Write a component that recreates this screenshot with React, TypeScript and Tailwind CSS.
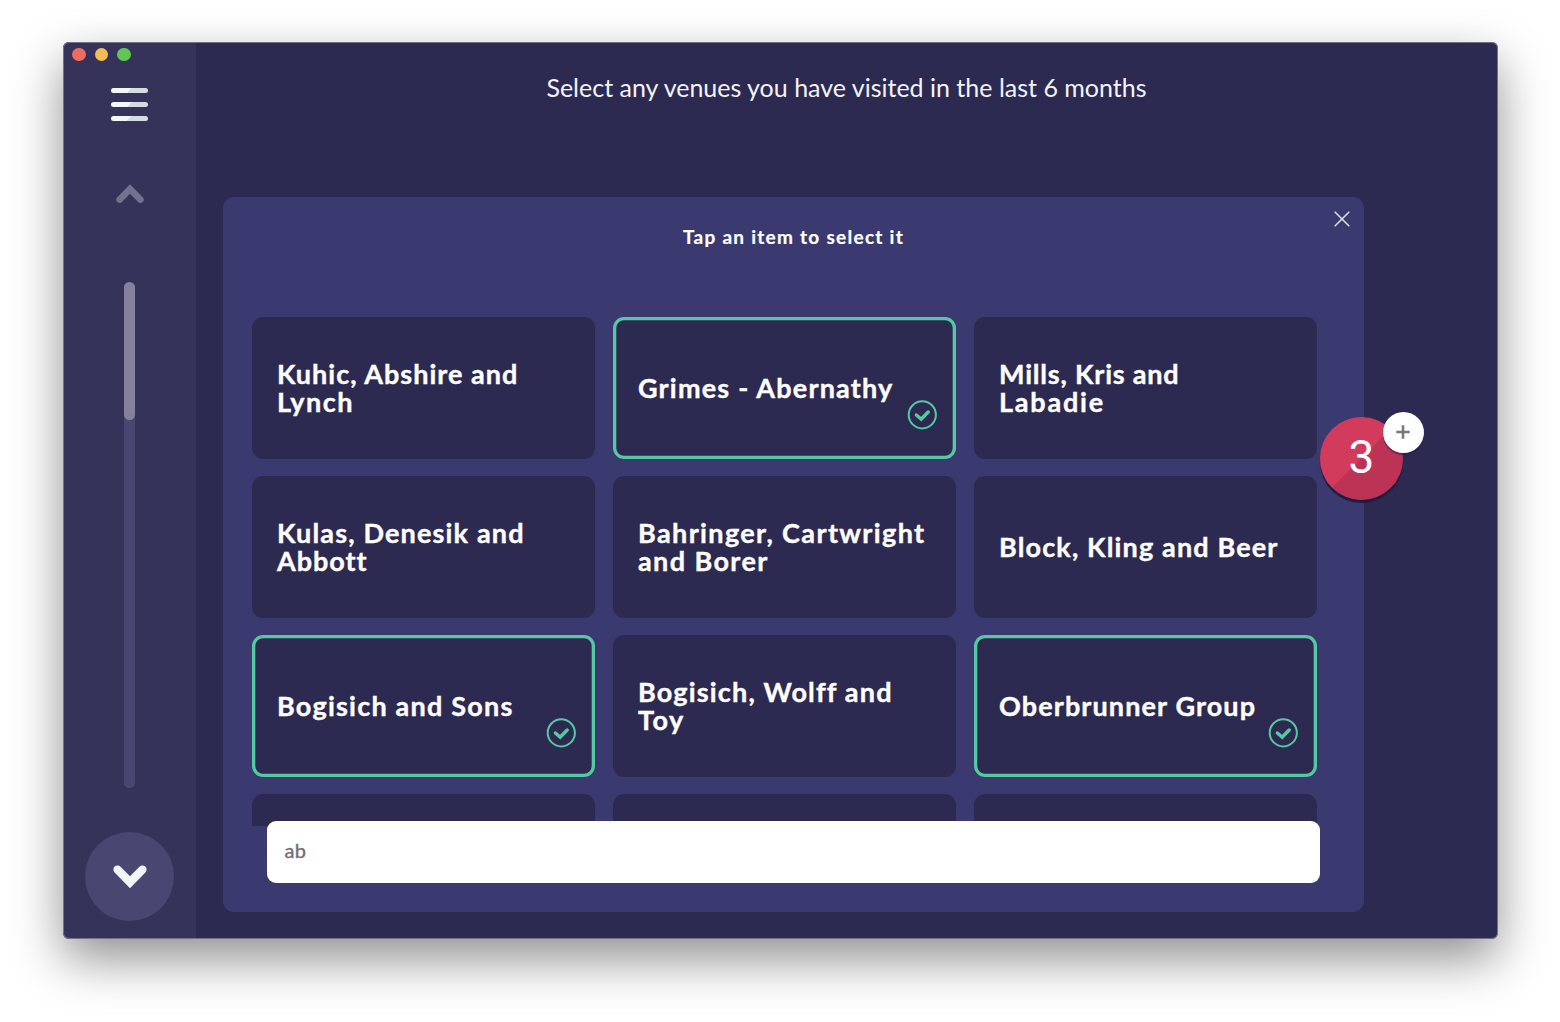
import clsx from "clsx";

type Line = { text: string; tracking: string };
type Venue = { lines: Line[]; selected?: boolean };

const venues: Venue[] = [
  { lines: [{ text: "Kuhic, Abshire and", tracking: "tracking-[1.02px]" }, { text: "Lynch", tracking: "tracking-[1.55px]" }] },
  { lines: [{ text: "Grimes - Abernathy", tracking: "tracking-[1.2px]" }], selected: true },
  { lines: [{ text: "Mills, Kris and", tracking: "tracking-[0.8px]" }, { text: "Labadie", tracking: "tracking-[1.8px]" }] },
  { lines: [{ text: "Kulas, Denesik and", tracking: "tracking-[1.17px]" }, { text: "Abbott", tracking: "tracking-[0.95px]" }] },
  { lines: [{ text: "Bahringer, Cartwright", tracking: "tracking-[1.38px]" }, { text: "and Borer", tracking: "tracking-[1.4px]" }] },
  { lines: [{ text: "Block, Kling and Beer", tracking: "tracking-[1.14px]" }] },
  { lines: [{ text: "Bogisich and Sons", tracking: "tracking-[1.22px]" }], selected: true },
  { lines: [{ text: "Bogisich, Wolff and", tracking: "tracking-[1.17px]" }, { text: "Toy", tracking: "tracking-[1.5px]" }] },
  { lines: [{ text: "Oberbrunner Group", tracking: "tracking-[1.12px]" }], selected: true },
  { lines: [] },
  { lines: [] },
  { lines: [] },
];

function CheckBadge() {
  return (
    <svg className="absolute right-[19px] bottom-[29px] size-[30px]" viewBox="0 0 30 30" fill="none">
      <circle cx="15.3" cy="14.8" r="13.6" stroke="#56c8a2" strokeWidth="2" />
      <path d="M9.4 15 14.2 19.2 21.2 12" stroke="#56c8a2" strokeWidth="3.5" strokeLinecap="round" strokeLinejoin="miter" />
    </svg>
  );
}

function VenueCard({ lines, selected }: Venue) {
  return (
    <div
      className={clsx(
        "relative flex h-[142px] flex-col justify-center rounded-[11px] bg-[#2d2a51] pl-[25px]",
        selected && "inset-ring-[3.3px] inset-ring-[#56c8a2]",
      )}
    >
      {lines.map((l) => (
        <span
          key={l.text}
          className={clsx("block text-[27px] leading-[28px] font-bold whitespace-nowrap text-white [-webkit-text-stroke:0.4px_white]", l.tracking)}
        >
          {l.text}
        </span>
      ))}
      {selected && <CheckBadge />}
    </div>
  );
}

function Sidebar() {
  return (
    <aside className="flex w-[133px] shrink-0 flex-col items-center bg-[#36335b]">
      <div className="flex h-[25px] items-center gap-[9px] self-stretch pl-[9px]">
        <span className="size-[13.5px] rounded-full bg-[#ed6b60]" />
        <span className="size-[13.5px] rounded-full bg-[#f5bf4f]" />
        <span className="size-[13.5px] rounded-full bg-[#62c655]" />
      </div>
      <div className="mt-[21px] flex flex-col gap-[8.8px]">
        <span className="h-[5px] w-[37px] rounded-full bg-[linear-gradient(135deg,#f4f7f9_50%,#d5dde2_50%)]" />
        <span className="h-[5px] w-[37px] rounded-full bg-[linear-gradient(135deg,#f4f7f9_50%,#d5dde2_50%)]" />
        <span className="h-[5px] w-[37px] rounded-full bg-[linear-gradient(135deg,#f4f7f9_50%,#d5dde2_50%)]" />
      </div>
      <svg className="mt-[61px] h-[22px] w-[30px]" viewBox="0 0 30 22" fill="none">
        <path d="M4.6 17.6 15 7 25.4 17.6" stroke="#74708f" strokeWidth="6.6" strokeLinecap="round" />
      </svg>
      <div className="mt-[78px] h-[506px] w-[10.5px] rounded-full bg-[#4a4672]">
        <div className="h-[138px] w-full rounded-full bg-[#84809d]" />
      </div>
      <div className="mt-[44.5px] flex size-[89px] items-center justify-center rounded-full bg-[#4a4672]">
        <svg className="h-[24px] w-[34px]" viewBox="0 0 34 24" fill="none">
          <path d="M4.6 4.6 17 17.2 29.4 4.6" stroke="#f2f5f8" strokeWidth="8.4" strokeLinecap="round" />
        </svg>
      </div>
    </aside>
  );
}

function CountBadge() {
  return (
    <div className="absolute top-[374.5px] left-[1257px] size-[83px]">
      <div className="flex size-[83px] items-center justify-center rounded-full bg-[linear-gradient(135deg,#d33b5d_50%,#bd3355_50%)] shadow-[0_3px_1px_#1e1b3c]">
        <span className="relative -top-[1px] font-[Roboto,sans-serif] text-[46px] leading-none text-white">3</span>
      </div>
      <div className="absolute top-[-5px] left-[62.5px] flex size-[41px] items-center justify-center rounded-full bg-white shadow-[0_2px_1px_#1e1b3c88]">
        <svg className="size-[14px]" viewBox="0 0 14 14" stroke="#77777c" strokeWidth="2.6">
          <path d="M7 .3v13.4M.3 7h13.4" />
        </svg>
      </div>
    </div>
  );
}

export default function App() {
  return (
    <div className="h-[1022px] w-[1560px] overflow-hidden bg-white pt-[42px] pl-[63px] font-[Lato,sans-serif]">
      <div className="relative h-[897px] w-[1434.5px] rounded-[6px] shadow-[0_20px_50px_rgba(0,0,0,0.44)]">
        <div className="flex h-full overflow-hidden rounded-[6px] bg-[#2d2a51]">
          <Sidebar />
          <main className="flex grow flex-col pl-[27px]">
            <h1 className="mt-[28.5px] h-[32px] w-[1247px] text-center text-[25px] leading-[32px] text-[#f2f4f8]">
              Select any venues you have visited in the last 6 months
            </h1>
            <section className="relative mt-[94.8px] h-[714.5px] w-[1141px] rounded-[11px] bg-[#3b3a70] px-[29px]">
              <svg className="absolute top-[14px] right-[14px] size-[16px]" viewBox="0 0 16 16" stroke="#d8dde6" strokeWidth="1.6" strokeLinecap="round">
                <path d="M1.2 1.2l13.6 13.6M14.8 1.2 1.2 14.8" />
              </svg>
              <h2 className="pt-[27.5px] text-center text-[19px] leading-[24px] font-bold tracking-[1.28px] text-white [-webkit-text-stroke:0.2px_white]">
                Tap an item to select it
              </h2>
              <div className="mt-[68.5px] h-[508.5px] overflow-hidden">
                <div className="grid w-[1065px] grid-cols-3 gap-x-[18px] gap-y-[17px]">
                  {venues.map((v, i) => (
                    <VenueCard key={i} {...v} />
                  ))}
                </div>
              </div>
              <div className="relative mt-[-5px] ml-[15px] flex h-[62.5px] w-[1053px] items-center rounded-[9px] bg-white pb-[4px] pl-[17.5px] text-[20px] tracking-[0.3px] text-[#707076] [-webkit-text-stroke:0.4px_#707076]">
                ab
              </div>
            </section>
          </main>
        </div>
        <div className="pointer-events-none absolute inset-0 rounded-[6px] inset-ring inset-ring-[#8f8da0]/70" />
        <CountBadge />
      </div>
    </div>
  );
}
